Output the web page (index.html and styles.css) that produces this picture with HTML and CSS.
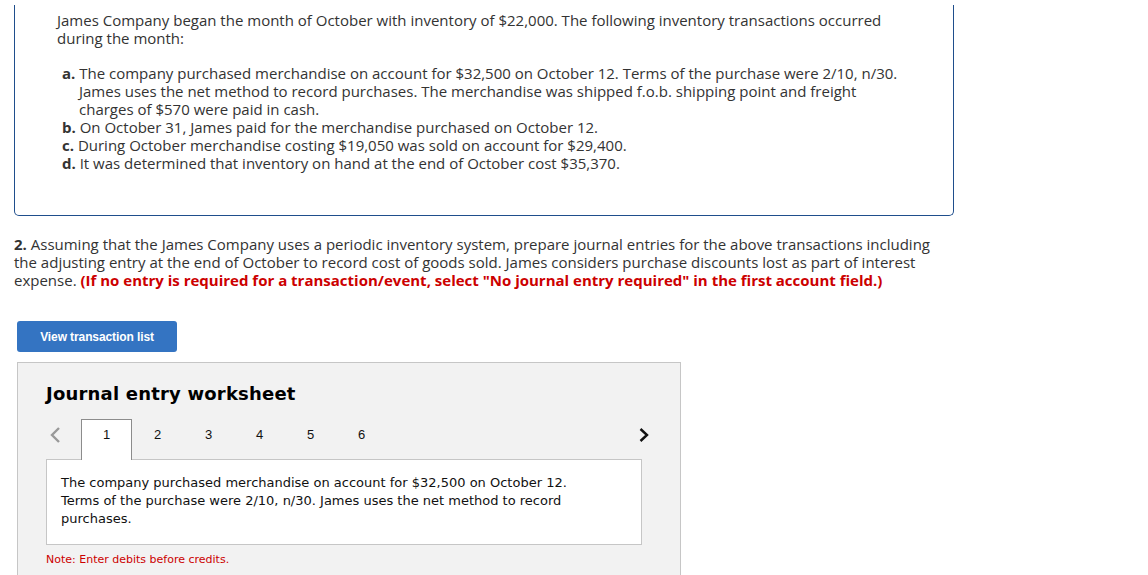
FILE: index.html
```html
<!DOCTYPE html>
<html>
<head>
<meta charset="utf-8">
<link rel="stylesheet" href="styles.css">
</head>
<body>
<div class="problem">
  <p class="intro">James Company began the month of October with inventory of $22,000. The following inventory transactions occurred during the month:</p>
  <div class="items">
    <div class="item"><b>a.</b> The company purchased merchandise on account for $32,500 on October 12. Terms of the purchase were 2/10, n/30. James uses the net method to record purchases. The merchandise was shipped f.o.b. shipping point and freight charges of $570 were paid in cash.</div>
    <div class="item"><b>b.</b> On October 31, James paid for the merchandise purchased on October 12.</div>
    <div class="item"><b>c.</b> During October merchandise costing $19,050 was sold on account for $29,400.</div>
    <div class="item"><b>d.</b> It was determined that inventory on hand at the end of October cost $35,370.</div>
  </div>
</div>
<p class="question"><b>2.</b> Assuming that the James Company uses a periodic inventory system, prepare journal entries for the above transactions including the adjusting entry at the end of October to record cost of goods sold. James considers purchase discounts lost as part of interest expense. <span class="warn">(If no entry is required for a transaction/event, select "No journal entry required" in the first account field.)</span></p>
<button class="btn">View transaction list</button>
<div class="panel">
  <h2 class="title">Journal entry worksheet</h2>
  <div class="tabs">
    <span class="nav prev"><svg width="12" height="18" viewBox="0 0 12 18"><path d="M10 2 L3 9 L10 16" fill="none" stroke="#999" stroke-width="2.4"/></svg></span>
    <span class="tab active">1</span>
    <span class="tab">2</span>
    <span class="tab">3</span>
    <span class="tab">4</span>
    <span class="tab">5</span>
    <span class="tab">6</span>
    <span class="spacer"></span>
    <span class="nav next"><svg width="12" height="16" viewBox="0 0 12 16"><path d="M2.5 2 L9 8 L2.5 14" fill="none" stroke="#111" stroke-width="2.4"/></svg></span>
  </div>
  <div class="desc">The company purchased merchandise on account for $32,500 on October 12. Terms of the purchase were 2/10, n/30. James uses the net method to record purchases.</div>
  <p class="note">Note: Enter debits before credits.</p>
</div>
</body>
</html>
```
FILE: styles.css
```css
html, body { margin: 0; padding: 0; background: #fff; }
body {
  font-family: "Open Sans", "Liberation Sans", sans-serif;
  font-size: 15px;
  line-height: 18px;
  color: #333;
  overflow: hidden;
  height: 575px;
}
p { margin: 0; }
.problem {
  margin: 5px 0 0 14px;
  width: 896px;
  height: 204px;
  border: 1.5px solid #1f4e8c;
  border-top: none;
  border-radius: 0 0 5px 5px;
  padding: 6px 0 0 42px;
  box-sizing: content-box;
}
.intro { width: 840px; }
.items { margin: 17px 0 0 5px; width: 845px; }
.item { padding-left: 17px; text-indent: -17px; }
.item b { font-weight: 700; }
.question { margin: 19px 0 0 14px; width: 930px; }
.question b { font-weight: 700; }
.warn { color: #c00; font-weight: 700; }
.btn {
  display: block;
  margin: 32px 0 0 17px;
  width: 160px;
  height: 31px;
  border: none;
  border-radius: 3px;
  background: #3474c2;
  color: #fff;
  font-family: "Liberation Sans", Arial, sans-serif;
  font-weight: 700;
  font-size: 12px;
  padding: 0;
  letter-spacing: -0.1px;
}
.panel {
  margin: 10px 0 0 17px;
  width: 664px;
  height: 220px;
  background: #f2f2f2;
  border: 1px solid #c6c6c6;
  padding: 0 0 0 28px;
  box-sizing: border-box;
  font-family: "DejaVu Sans", Verdana, sans-serif;
  color: #000;
}
.title {
  margin: 20px 0 0 0;
  font-size: 18px;
  line-height: 22px;
  font-weight: 700;
  letter-spacing: 0.2px;
}
.tabs {
  display: flex;
  align-items: stretch;
  margin-top: 14px;
  height: 40px;
  width: 604px;
  font-family: "Liberation Sans", Arial, sans-serif;
  font-size: 13px;
}
.nav { display: flex; align-items: flex-start; padding-top: 7px; box-sizing: border-box; }
.prev { width: 35px; padding-left: 3px; }
.next { width: 12px; padding-top: 8px; }
.tab {
  width: 51px;
  display: flex;
  align-items: flex-start;
  justify-content: center;
  padding-top: 8px;
  line-height: 15px;
  box-sizing: border-box;
  color: #111;
}
.tab.active {
  background: #fff;
  border: 1px solid #8c8c8c;
  border-bottom: none;
  padding-top: 7px;
  position: relative;
  z-index: 1;
  margin-bottom: -1px;
  height: 41px;
}
.spacer { flex: 1; }
.desc {
  background: #fff;
  border: 1px solid #c6c6c6;
  width: 596px;
  height: 86px;
  box-sizing: border-box;
  padding: 14px 60px 0 14px;
  font-size: 13px;
  line-height: 18px;
  color: #111;
}
.note {
  margin-top: 8px;
  color: #c00;
  font-size: 11px;
  line-height: 14px;
}
```
